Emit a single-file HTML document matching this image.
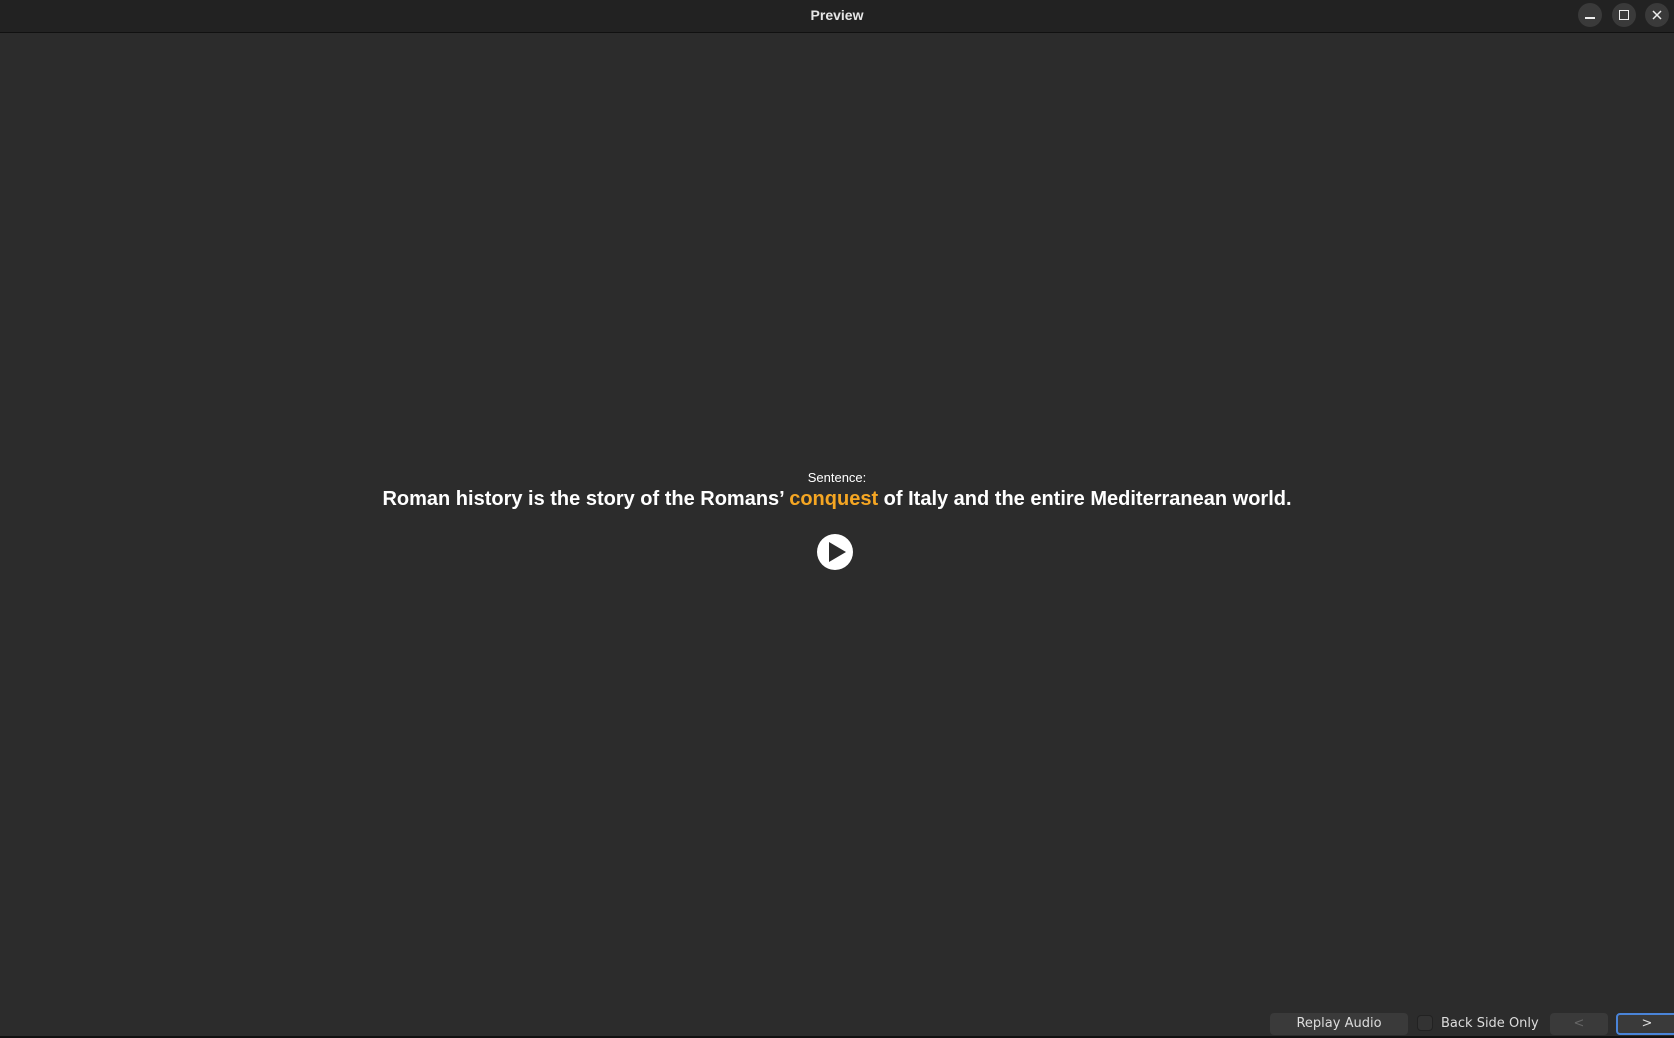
<!DOCTYPE html>
<html><head><meta charset="utf-8"><style>
*{margin:0;padding:0;box-sizing:border-box}
body{width:1674px;height:1038px;background:#2c2c2c;position:relative;overflow:hidden;font-family:"Liberation Sans",sans-serif}
.tb{position:absolute;left:0;top:0;width:1674px;height:33px;background:#222;border-bottom:1px solid #111}
.title{position:absolute;left:0;width:1674px;top:7px;text-align:center;color:#e6e6e6;font-weight:bold;font-size:14px;font-family:"Liberation Sans",sans-serif}
.wb{position:absolute;top:3px;width:24px;height:24px;border-radius:50%;background:#3a3a3a}
.lbl{position:absolute;left:0;width:1674px;top:470px;text-align:center;color:#fff;font-size:13px}
.sent{position:absolute;left:0;width:1674px;top:488px;text-align:center;color:#fff;font-size:20px;font-weight:bold}
.sent span{color:#f5a623}
.btn{position:absolute;top:1013px;height:22px;border-radius:4px;background:#3a3a3a;color:#ddd;font-size:13px;text-align:center;line-height:22px;font-family:"DejaVu Sans",sans-serif}
.bot{position:absolute;left:0;top:1036px;width:1674px;height:2px;background:#111}
</style></head><body>
<div class="tb"><div class="title">Preview</div>
<div class="wb" style="left:1578px"><div style="position:absolute;left:7px;top:14px;width:10px;height:1.5px;background:#eee"></div></div>
<div class="wb" style="left:1612px"><div style="position:absolute;left:7px;top:7px;width:10px;height:10px;border:1.5px solid #eee"></div></div>
<div class="wb" style="left:1645px"><svg width="24" height="24" style="position:absolute;left:0;top:0"><path d="M8 8L16 16M16 8L8 16" stroke="#eee" stroke-width="1.5"/></svg></div>
</div>
<div class="lbl">Sentence:</div>
<div class="sent">Roman history is the story of the Romans’ <span>conquest</span> of Italy and the entire Mediterranean world.</div>
<svg width="40" height="40" style="position:absolute;left:815px;top:533px"><circle cx="20" cy="19" r="18" fill="#fff"/><path d="M14 9L31 19L14 29Z" fill="#2c2c2c"/></svg>
<div class="btn" style="left:1270px;width:138px">Replay Audio</div>
<div style="position:absolute;left:1417px;top:1015px;width:16px;height:16px;border-radius:4px;background:#333;border:1px solid #222"></div>
<div style="position:absolute;left:1441px;top:1016px;color:#ddd;font-size:13px;font-family:'DejaVu Sans',sans-serif">Back Side Only</div>
<div class="btn" style="left:1550px;width:58px;color:#666">&lt;</div>
<div class="btn" style="left:1616px;width:62px;border:2px solid #4a84d8;line-height:18px">&gt;</div>
<div class="bot"></div>
</body></html>
